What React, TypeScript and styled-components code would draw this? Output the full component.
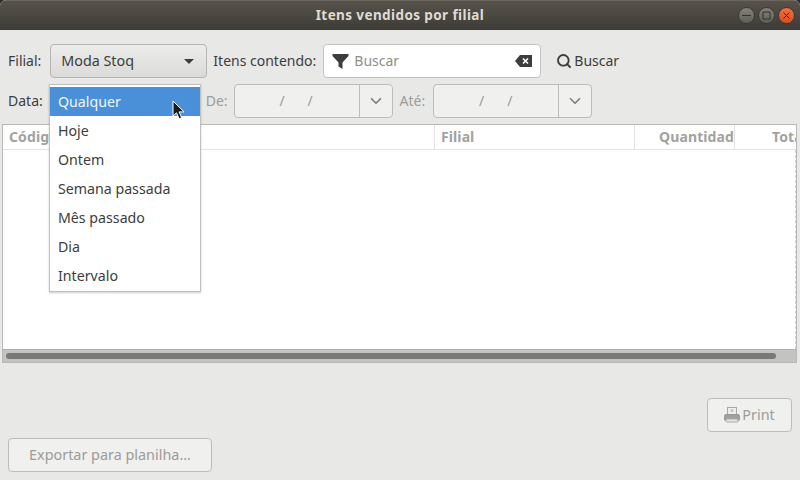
import styled, { createGlobalStyle } from "styled-components"
import { Search, ChevronDown } from "lucide-react"

const GlobalStyle = createGlobalStyle`
    html, body {
        margin: 0;
        padding: 0;
        width: 800px;
        height: 480px;
        overflow: hidden;
        background: #2c2b27;
    }
    * { box-sizing: border-box; }
`

const Window = styled.div`
    position: relative;
    width: 800px;
    height: 480px;
    display: flex;
    flex-direction: column;
    background: #e8e8e7;
    border-radius: 6px 6px 0 0;
    overflow: hidden;
    font-family: "Noto Sans", "Open Sans", sans-serif;
    font-size: 14px;
    color: #3d3d3d;
`

const TitleBar = styled.header`
    position: relative;
    height: 30px;
    flex: none;
    display: flex;
    align-items: center;
    justify-content: center;
    background: linear-gradient(#57534b, #3e3c37);
    border-top: 1px solid #6b675e;
    color: #dfdbd2;
    font-weight: 700;
    font-size: 13.5px;
    letter-spacing: 0.4px;
    padding-bottom: 1px;
`

const WindowButtons = styled.div`
    position: absolute;
    right: 5px;
    top: 6px;
    display: flex;
    gap: 3px;
`

const WindowButton = styled.div<{ $close?: boolean }>`
    width: 17px;
    height: 17px;
    border-radius: 50%;
    display: flex;
    align-items: center;
    justify-content: center;
    background: ${p => (p.$close ? "linear-gradient(#f0703f, #dc4c1e)" : "linear-gradient(#85827b, #5f5d57)")};
    border: 1px solid #3a3833;
`

const Content = styled.main`
    flex: 1;
    display: flex;
    flex-direction: column;
    padding: 14px 8px 8px;
`

const FilterRow = styled.div`
    height: 34px;
    display: flex;
    align-items: center;
    margin-bottom: 6px;
`

const Label = styled.span<{ $disabled?: boolean; $gap?: number }>`
    color: ${p => (p.$disabled ? "#9c9c9a" : "#3d3d3d")};
    margin-right: ${p => p.$gap ?? 6}px;
    padding-bottom: 2px;
    white-space: nowrap;
`

const ButtonText = styled.span`
    padding-bottom: 2px;
`

const ComboButton = styled.div`
    width: 157px;
    height: 34px;
    margin-right: 6px;
    padding: 0 12px 0 10px;
    display: flex;
    align-items: center;
    justify-content: space-between;
    border: 1px solid #b6b5b1;
    border-radius: 4px;
    background: linear-gradient(#ececeb, #dadad8);
    font-size: 14.3px;
`

const Caret = styled.span`
    width: 0;
    height: 0;
    border-left: 5px solid transparent;
    border-right: 5px solid transparent;
    border-top: 5px solid #3d3d3d;
`

const SearchEntry = styled.div`
    width: 218px;
    height: 34px;
    margin-right: 15px;
    padding: 0 8px;
    display: flex;
    align-items: center;
    background: #fff;
    border: 1px solid #c4c3bf;
    border-radius: 4px;
    color: #8e8e8c;
`

const Placeholder = styled.span`
    flex: 1;
    margin-left: 5px;
    padding-bottom: 2px;
`

const SearchButton = styled.div`
    display: flex;
    align-items: center;
    gap: 2px;
`

const ComboSpacer = styled.div`
    width: 151px;
    margin-right: 6px;
`

const DateEntry = styled.div`
    width: 159px;
    height: 34px;
    margin-right: 7px;
    display: flex;
    background: #f0f0ef;
    border: 1px solid #bdbcb8;
    border-radius: 4px;
    color: #9c9c9a;
`

const DateText = styled.div`
    flex: 1;
    display: flex;
    justify-content: center;
    align-items: center;
    gap: 23px;
    padding: 0 1px 2px 0;
`

const DateArrow = styled.div`
    width: 33px;
    display: flex;
    align-items: center;
    justify-content: center;
    border-left: 1px solid #bdbcb8;
    color: #7d7d7b;
`

const Table = styled.section`
    height: 239px;
    margin: 0 -5px 0 -6px;
    display: flex;
    flex-direction: column;
    background: #fff;
    border: 1px solid #b9b8b4;
`

const TableHead = styled.div`
    height: 25px;
    flex: none;
    display: grid;
    grid-template-columns: 432px 200px 100px 1fr;
    border-bottom: 1px solid #e4e4e2;
    color: #a2a2a0;
    font-weight: 700;
    font-size: 14px;
    letter-spacing: 0.1px;
    overflow: hidden;
`

const HeadCell = styled.div<{ $right?: boolean; $indent?: number }>`
    display: flex;
    align-items: center;
    justify-content: ${p => (p.$right ? "flex-end" : "flex-start")};
    padding: 0 0 2px ${p => p.$indent ?? 6}px;
    border-right: 1px solid #e4e4e2;
    white-space: nowrap;
    overflow: hidden;

    &:last-child { border-right: 0; }
`

const TableBody = styled.div`
    flex: 1;
    border-right: 1px dashed #d2d2d0;
`

const ScrollTrack = styled.div`
    height: 13px;
    flex: none;
    padding: 3px 20px 3px 3px;
    background: #c3c3c1;
    border-top: 1px solid #b0afab;
`

const ScrollThumb = styled.div`
    height: 6px;
    border-radius: 3px;
    background: #787a7a;
`

const Footer = styled.footer`
    flex: 1;
    display: flex;
    flex-direction: column;
    justify-content: flex-end;
    gap: 6px;
`

const DisabledButton = styled.div<{ $width: number }>`
    width: ${p => p.$width}px;
    height: 34px;
    display: flex;
    align-items: center;
    justify-content: center;
    gap: 2px;
    background: #f0f0ef;
    border: 1px solid #bdbcb8;
    border-radius: 4px;
    color: #9c9c9a;
    font-size: 14.4px;
`

const PrintRow = styled.div`
    display: flex;
    justify-content: flex-end;
`

const Menu = styled.ul`
    position: absolute;
    left: 49px;
    top: 84px;
    width: 152px;
    margin: 0;
    padding: 2px 0 1px;
    list-style: none;
    background: #fff;
    border: 1px solid #c2c1bd;
    box-shadow: 0 1px 2px rgba(0, 0, 0, 0.2);
`

const MenuItem = styled.li<{ $active?: boolean }>`
    height: 29px;
    padding: 0 0 1px 8px;
    display: flex;
    align-items: center;
    background: ${p => (p.$active ? "#4a90d9" : "transparent")};
    color: ${p => (p.$active ? "#f2f6fb" : "#3d3d3d")};
    font-size: 14.2px;
`

const Cursor = styled.svg`
    position: absolute;
    left: 172px;
    top: 100px;
`

const options = ["Qualquer", "Hoje", "Ontem", "Semana passada", "Mês passado", "Dia", "Intervalo"]

function DateField() {
    return (
        <DateEntry>
            <DateText><span>/</span><span>/</span></DateText>
            <DateArrow><ChevronDown size={18} strokeWidth={2.2} /></DateArrow>
        </DateEntry>
    )
}

function FunnelIcon() {
    return (
        <svg width="17" height="17" viewBox="0 0 17 17">
            <path d="M0.5 1h16v2l-6 6.5V16l-4-2.5v-4l-6-6.5z" fill="#3d3d3d" />
        </svg>
    )
}

function ClearIcon() {
    return (
        <svg width="17" height="12" viewBox="0 0 17 12">
            <path d="M5 0h12v12H5L0 6z" fill="#3d3d3d" />
            <path d="M8 3.5l5 5M13 3.5l-5 5" stroke="#fff" strokeWidth="1.6" />
        </svg>
    )
}

function PrinterIcon() {
    return (
        <svg width="16" height="16" viewBox="0 0 16 16">
            <rect x="3.5" y="0.5" width="9" height="8" fill="#eeeeec" stroke="#a8a8a6" />
            <path d="M8 2v3M6.5 4h3" stroke="#b5b5b3" />
            <rect x="0.5" y="7.5" width="15" height="6" rx="1.5" fill="#a0a09e" stroke="#9a9a98" />
            <rect x="2" y="12" width="12" height="3" rx="1" fill="#e8e8e6" stroke="#a8a8a6" />
        </svg>
    )
}

export default function App() {
    return (
        <Window>
            <GlobalStyle />
            <TitleBar>
                Itens vendidos por filial
                <WindowButtons>
                    <WindowButton>
                        <svg width="9" height="9" viewBox="0 0 9 9"><path d="M0 4.5h9" stroke="#35332f" /></svg>
                    </WindowButton>
                    <WindowButton>
                        <svg width="9" height="9" viewBox="0 0 9 9"><rect x="1" y="1" width="7" height="7" fill="none" stroke="#35332f" /></svg>
                    </WindowButton>
                    <WindowButton $close>
                        <svg width="9" height="9" viewBox="0 0 9 9"><path d="M1.5 1.5l6 6M7.5 1.5l-6 6" stroke="#4a2412" /></svg>
                    </WindowButton>
                </WindowButtons>
            </TitleBar>
            <Content>
                <FilterRow>
                    <Label $gap={9}>Filial:</Label>
                    <ComboButton><ButtonText>Moda Stoq</ButtonText><Caret /></ComboButton>
                    <Label $gap={7}>Itens contendo:</Label>
                    <SearchEntry>
                        <FunnelIcon />
                        <Placeholder>Buscar</Placeholder>
                        <ClearIcon />
                    </SearchEntry>
                    <SearchButton>
                        <Search size={16} strokeWidth={2.8} />
                        <ButtonText>Buscar</ButtonText>
                    </SearchButton>
                </FilterRow>
                <FilterRow>
                    <Label>Data:</Label>
                    <ComboSpacer />
                    <Label $disabled>De:</Label>
                    <DateField />
                    <Label $disabled $gap={8}>Até:</Label>
                    <DateField />
                </FilterRow>
                <Table>
                    <TableHead>
                        <HeadCell>Código</HeadCell>
                        <HeadCell>Filial</HeadCell>
                        <HeadCell $right>Quantidad</HeadCell>
                        <HeadCell $indent={37}>Total</HeadCell>
                    </TableHead>
                    <TableBody />
                    <ScrollTrack><ScrollThumb /></ScrollTrack>
                </Table>
                <Footer>
                    <PrintRow>
                        <DisabledButton $width={85}><PrinterIcon /><ButtonText>Print</ButtonText></DisabledButton>
                    </PrintRow>
                    <DisabledButton $width={204}><ButtonText>Exportar para planilha...</ButtonText></DisabledButton>
                </Footer>
            </Content>
            <Menu>
                {options.map((o, i) => <MenuItem key={o} $active={i === 0}>{o}</MenuItem>)}
            </Menu>
            <Cursor width="14" height="21" viewBox="0 0 14 21">
                <path d="M1 1v15l3.5-3.2 2.6 6 2.6-1.1-2.6-5.8h5z" fill="#1a1a1a" stroke="#fff" strokeWidth="1" />
            </Cursor>
        </Window>
    )
}
